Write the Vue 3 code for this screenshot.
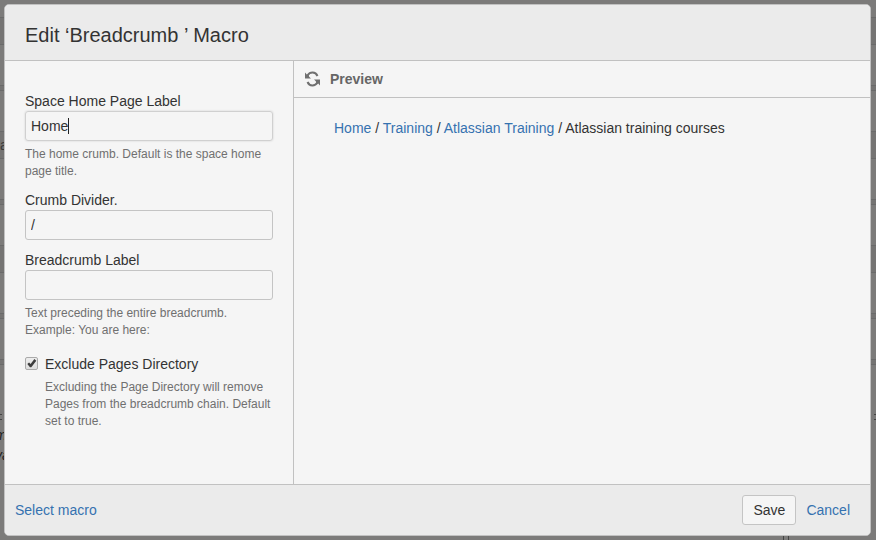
<script setup>
import { ref, onMounted } from 'vue';

const homeLabel = ref('Home');
const divider = ref('/');
const breadcrumbLabel = ref('');
const excludePages = ref(true);
const homeInput = ref(null);

// Rows of the page that stay visible around the dialog
const pageRows = [
  { height: 18, tone: 'plain', text: '' },
  { height: 27, tone: 'dark', text: '' },
  { height: 41, tone: 'plain', text: '' },
  { height: 5, tone: 'dark', text: '' },
  { height: 41, tone: 'plain', text: '' },
  { height: 27, tone: 'dark', text: 'a' },
  { height: 41, tone: 'plain', text: '' },
  { height: 5, tone: 'dark', text: '' },
  { height: 41, tone: 'plain', text: '' },
  { height: 27, tone: 'dark', text: '' },
  { height: 41, tone: 'plain', text: '' },
  { height: 5, tone: 'dark', text: '' },
  { height: 41, tone: 'plain', text: '' },
  { height: 5, tone: 'dark', text: '' },
];

const crumbs = ['Home', 'Training', 'Atlassian Training'];

onMounted(() => {
  homeInput.value.focus();
});
</script>

<template>
  <div class="page">
    <div class="backdrop" aria-hidden="true">
      <div
        v-for="(row, index) in pageRows"
        :key="index"
        class="page-row"
        :class="row.tone"
        :style="{ height: row.height + 'px' }"
      >{{ row.text }}</div>
      <div class="page-text">
        <div class="dashes">
          <span class="dash"></span>
          <span class="dash right"></span>
        </div>
        <em>m</em>
        <em>va</em>
      </div>
      <span class="tick"></span>
    </div>

    <section class="dialog" role="dialog" aria-labelledby="dialog-title">
      <header class="dialog-title">
        <h2 id="dialog-title">Edit ‘Breadcrumb ’ Macro</h2>
      </header>

      <div class="dialog-body">
        <form id="macro-form" class="params" @submit.prevent>
          <div class="field">
            <label for="home-label">Space Home Page Label</label>
            <div class="input-wrap">
              <input id="home-label" ref="homeInput" v-model="homeLabel" type="text" />
              <span class="caret"></span>
            </div>
            <p class="hint">The home crumb. Default is the space home page title.</p>
          </div>
          <div class="field">
            <label for="divider">Crumb Divider.</label>
            <input id="divider" v-model="divider" type="text" />
          </div>
          <div class="field">
            <label for="crumb-label">Breadcrumb Label</label>
            <input id="crumb-label" v-model="breadcrumbLabel" type="text" />
            <p class="hint">Text preceding the entire breadcrumb. Example: You are here:</p>
          </div>
          <div class="check-field">
            <input id="exclude" v-model="excludePages" type="checkbox" />
            <div>
              <label for="exclude">Exclude Pages Directory</label>
              <p class="hint">Excluding the Page Directory will remove Pages from the breadcrumb chain. Default set to true.</p>
            </div>
          </div>
        </form>

        <div class="preview">
          <div class="preview-header">
            <button type="button" class="refresh" aria-label="Refresh preview">
              <svg viewBox="0 0 16 16" width="16" height="16">
                <path d="M3.500 4.500C6 .5 11.500.5 13.500 5" />
                <path d="M13.500 11.500C11 15.500 5.500 15.500 3.500 11" />
                <path class="head" d="M1 1.500V7.500H7L5.200 5.800 4.500 3.200 2.800 3.500Z" />
                <path class="head" d="M16 14.500V8.500H10L11.800 10.200 12.500 12.800 14.200 12.500Z" />
              </svg>
            </button>
            <h3>Preview</h3>
          </div>
          <nav class="crumbs" aria-label="Breadcrumb">
            <template v-for="crumb in crumbs" :key="crumb">
              <a href="#">{{ crumb }}</a>
              <span>{{ ` ${divider} ` }}</span>
            </template>
            <span>Atlassian training courses</span>
          </nav>
        </div>
      </div>

      <footer class="dialog-footer">
        <a href="#">Select macro</a>
        <div class="actions">
          <button type="submit" form="macro-form" class="save">Save</button>
          <a href="#">Cancel</a>
        </div>
      </footer>
    </section>
  </div>
</template>

<style>
body {
  margin: 0;
  background: #7c7b7a;
}
</style>

<style scoped>
.page {
  position: relative;
  box-sizing: border-box;
  min-height: 100vh;
  padding: 4px 5px 4px 4px;
  display: flex;
  overflow: hidden;
  font-family: Arial, "Liberation Sans", sans-serif;
  font-size: 14px;
  line-height: 20px;
  color: #333;
}

.backdrop {
  position: absolute;
  inset: 0;
  overflow: hidden;
  color: #3a3a3a;
}

.page-row {
  box-sizing: border-box;
  border-bottom: 1px solid #6a6a6a;
  line-height: 26px;
}

.page-row.dark {
  background: #757473;
}

.page-text {
  padding-top: 49px;
  color: #222;
}

.dashes {
  display: flex;
  justify-content: space-between;
  padding-bottom: 5px;
}

.dash {
  width: 2px;
  height: 4px;
  border-top: 1px solid #444;
  border-bottom: 1px solid #444;
}

.page-text em {
  display: block;
  text-indent: -5px;
}

.tick {
  position: absolute;
  right: 87px;
  bottom: 0;
  width: 4px;
  height: 4px;
  border-left: 1px solid #444;
  border-right: 1px solid #444;
}

/* Dialog shell */
.dialog {
  position: relative;
  flex: 1;
  display: flex;
  flex-direction: column;
  background: #f5f5f5;
  border: 1px solid #c1c1c1;
  border-radius: 5px;
  overflow: hidden;
}

.dialog-title {
  padding: 18px 20px 12px;
  background: #ebebeb;
  border-bottom: 1px solid #c1c1c1;
}

.dialog-title h2 {
  margin: 0;
  font-size: 20px;
  font-weight: normal;
  line-height: 25px;
}

.dialog-body {
  flex: 1;
  display: flex;
}

/* Macro parameters */
.params {
  box-sizing: border-box;
  flex: none;
  width: 289px;
  padding: 30px 20px;
  border-right: 1px solid #c1c1c1;
}

.field {
  margin-bottom: 10px;
}

.field label,
.check-field label {
  display: block;
}

.input-wrap {
  position: relative;
}

.field input {
  display: block;
  box-sizing: border-box;
  width: 100%;
  height: 30px;
  padding: 4px 5px;
  border: 1px solid #c4c4c4;
  border-radius: 3px;
  background: transparent;
  color: #333;
  font: inherit;
}

.field input:focus {
  outline: none;
  border-color: #d0d0d0;
  box-shadow: 0 0 2px #ccc;
  caret-color: transparent;
}

.caret {
  display: none;
  position: absolute;
  top: 7px;
  left: 43px;
  width: 1px;
  height: 16px;
  background: #222;
}

.field input:focus + .caret {
  display: block;
}

.hint {
  margin: 5px 0 0;
  color: #707070;
  font-size: 12px;
  line-height: 17px;
}

.check-field {
  display: flex;
  gap: 7px;
  padding-top: 5px;
}

.check-field input {
  appearance: none;
  box-sizing: border-box;
  flex: none;
  width: 13px;
  height: 13px;
  margin: 3px 0 0;
  border: 1px solid #aaa;
  border-radius: 2px;
  background: linear-gradient(#ededed, #dedede);
}

.check-field input:checked::before {
  content: "";
  display: block;
  height: 11px;
  background: #3d3d3d;
  clip-path: polygon(12% 54%, 28% 40%, 42% 54%, 76% 10%, 94% 24%, 48% 84%, 36% 84%);
}

/* Preview pane */
.preview {
  flex: 1;
}

.preview-header {
  display: flex;
  align-items: center;
  gap: 10px;
  height: 36px;
  padding: 0 10px;
  border-bottom: 1px solid #c1c1c1;
}

.preview-header h3 {
  margin: 0;
  color: #666;
  font-size: 14px;
}

.refresh {
  display: flex;
  padding: 0;
  border: 0;
  background: none;
}

.refresh path {
  fill: none;
  stroke: #707070;
  stroke-width: 2;
}

.refresh .head {
  fill: #707070;
  stroke: none;
}

.crumbs {
  padding: 20px 40px;
}

.crumbs span {
  white-space: pre-wrap;
}

a {
  color: #3572b0;
  text-decoration: none;
}

.dialog-footer {
  display: flex;
  align-items: center;
  justify-content: space-between;
  padding: 10px;
  background: #ebebeb;
  border-top: 1px solid #c1c1c1;
}

.actions {
  display: flex;
  align-items: center;
  gap: 10px;
  padding-right: 10px;
}

.save {
  height: 30px;
  padding: 0 10px;
  border: 1px solid #c4c4c4;
  border-radius: 3px;
  background: #f5f5f5;
  color: #333;
  font: inherit;
}
</style>
